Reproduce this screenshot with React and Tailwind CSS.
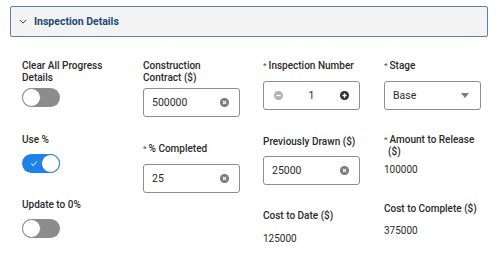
import React, { useState } from "react";

const font = { fontFamily: "Roboto, 'Liberation Sans', Arial, sans-serif" };

function Toggle({ on }) {
  return (
    <div
      className={`relative w-[38px] h-[19px] rounded-full ${
        on ? "bg-[#1d83ea]" : "bg-[#8c8c8c]"
      }`}
    >
      {on && (
        <svg viewBox="0 0 10 10" className="absolute left-[8px] top-[6px] w-[8px] h-[7px]">
          <path d="M1 5 L4 8 L9 2" stroke="white" strokeWidth="1.4" fill="none" />
        </svg>
      )}
      <div
        className={`absolute top-0 w-[19px] h-[19px] rounded-full bg-white border ${
          on ? "right-0 border-[#1d83ea]" : "left-0 border-[#8c8c8c]"
        }`}
      />
    </div>
  );
}

function ClearIcon() {
  return (
    <svg viewBox="0 0 10 10" className="w-[9px] h-[9px]">
      <circle cx="5" cy="5" r="5" fill="#7a7a7a" />
      <path d="M3.2 3.2 L6.8 6.8 M6.8 3.2 L3.2 6.8" stroke="white" strokeWidth="1.3" />
    </svg>
  );
}

function Label({ children, required }) {
  return (
    <div className="text-[10px] leading-[12px] font-medium text-[#2a2a2a]">
      {required && <span className="text-[#555] text-[8px] align-top mr-[2px]">*</span>}
      {children}
    </div>
  );
}

function TextInput({ value, className = "" }) {
  return (
    <div
      className={`w-[97px] h-[29px] border border-[#8e8e8e] rounded-[3px] flex items-center justify-between pl-[8px] pr-[10px] text-[10.5px] text-[#2a2a2a] ${className}`}
    >
      <span>{value}</span>
      <ClearIcon />
    </div>
  );
}

export default function App() {
  const [open] = useState(true);

  return (
    <div className="w-[498px] h-[258px] bg-white overflow-hidden" style={font}>
      <div className="pt-[6px] px-[10px]">
        <div className="h-[31px] border border-[#5d7fa6] bg-[#f3f3f3] rounded-[2px] flex items-center pl-[8px]">
          <svg viewBox="0 0 10 6" className="w-[8px] h-[5px] mr-[7px]">
            <path d="M1 1 L5 5 L9 1" stroke="#333" strokeWidth="1.2" fill="none" />
          </svg>
          <span className="text-[10.5px] font-bold text-[#1c4a75]">Inspection Details</span>
        </div>
      </div>

      {open && (
        <div className="grid grid-cols-[121px_120px_121px_1fr] pl-[22px] pt-[23px]">
          {/* column 1 */}
          <div className="flex flex-col">
            <Label>
              Clear All Progress
              <br />
              Details
            </Label>
            <div className="mt-[4px]">
              <Toggle on={false} />
            </div>
            <div className="mt-[27px]">
              <Label>Use %</Label>
            </div>
            <div className="mt-[8px]">
              <Toggle on={true} />
            </div>
            <div className="mt-[26px]">
              <Label>Update to 0%</Label>
            </div>
            <div className="mt-[8px]">
              <Toggle on={false} />
            </div>
          </div>

          {/* column 2 */}
          <div className="flex flex-col">
            <Label>
              Construction
              <br />
              Contract ($)
            </Label>
            <TextInput value="500000" className="mt-[4px]" />
            <div className="mt-[26px]">
              <Label required>% Completed</Label>
            </div>
            <TextInput value="25" className="mt-[9px]" />
          </div>

          {/* column 3 */}
          <div className="flex flex-col">
            <Label required>Inspection Number</Label>
            <div className="mt-[9px] w-[97px] h-[29px] border border-[#8e8e8e] rounded-[3px] flex items-center justify-between px-[10px] text-[10.5px] text-[#2a2a2a]">
              <svg viewBox="0 0 10 10" className="w-[9px] h-[9px]">
                <circle cx="5" cy="5" r="5" fill="#b3b3b3" />
                <path d="M2.6 5 H7.4" stroke="white" strokeWidth="1.5" />
              </svg>
              <span>1</span>
              <svg viewBox="0 0 10 10" className="w-[9px] h-[9px]">
                <circle cx="5" cy="5" r="5" fill="#2f2f2f" />
                <path d="M2.6 5 H7.4 M5 2.6 V7.4" stroke="white" strokeWidth="1.5" />
              </svg>
            </div>
            <div className="mt-[26px]">
              <Label>Previously Drawn ($)</Label>
            </div>
            <TextInput value="25000" className="mt-[8px]" />
            <div className="mt-[25px]">
              <Label>Cost to Date ($)</Label>
            </div>
            <div className="mt-[11px] text-[10px] leading-[12px] text-[#2a2a2a]">125000</div>
          </div>

          {/* column 4 */}
          <div className="flex flex-col">
            <Label required>Stage</Label>
            <div className="mt-[9px] w-[97px] h-[29px] border border-[#8e8e8e] rounded-[3px] flex items-center justify-between pl-[8px] pr-[11px] text-[10.5px] text-[#2a2a2a]">
              <span>Base</span>
              <svg viewBox="0 0 8 5" className="w-[8px] h-[5px]">
                <path d="M0 0 H8 L4 5 Z" fill="#7a7a7a" />
              </svg>
            </div>
            <div className="mt-[24px]">
              <Label required>
                Amount to Release
                <br />
                <span className="ml-[4px]">($)</span>
              </Label>
            </div>
            <div className="mt-[6px] text-[10px] leading-[12px] text-[#2a2a2a]">100000</div>
            <div className="mt-[27px]">
              <Label>Cost to Complete ($)</Label>
            </div>
            <div className="mt-[10px] text-[10px] leading-[12px] text-[#2a2a2a]">375000</div>
          </div>
        </div>
      )}
    </div>
  );
}
